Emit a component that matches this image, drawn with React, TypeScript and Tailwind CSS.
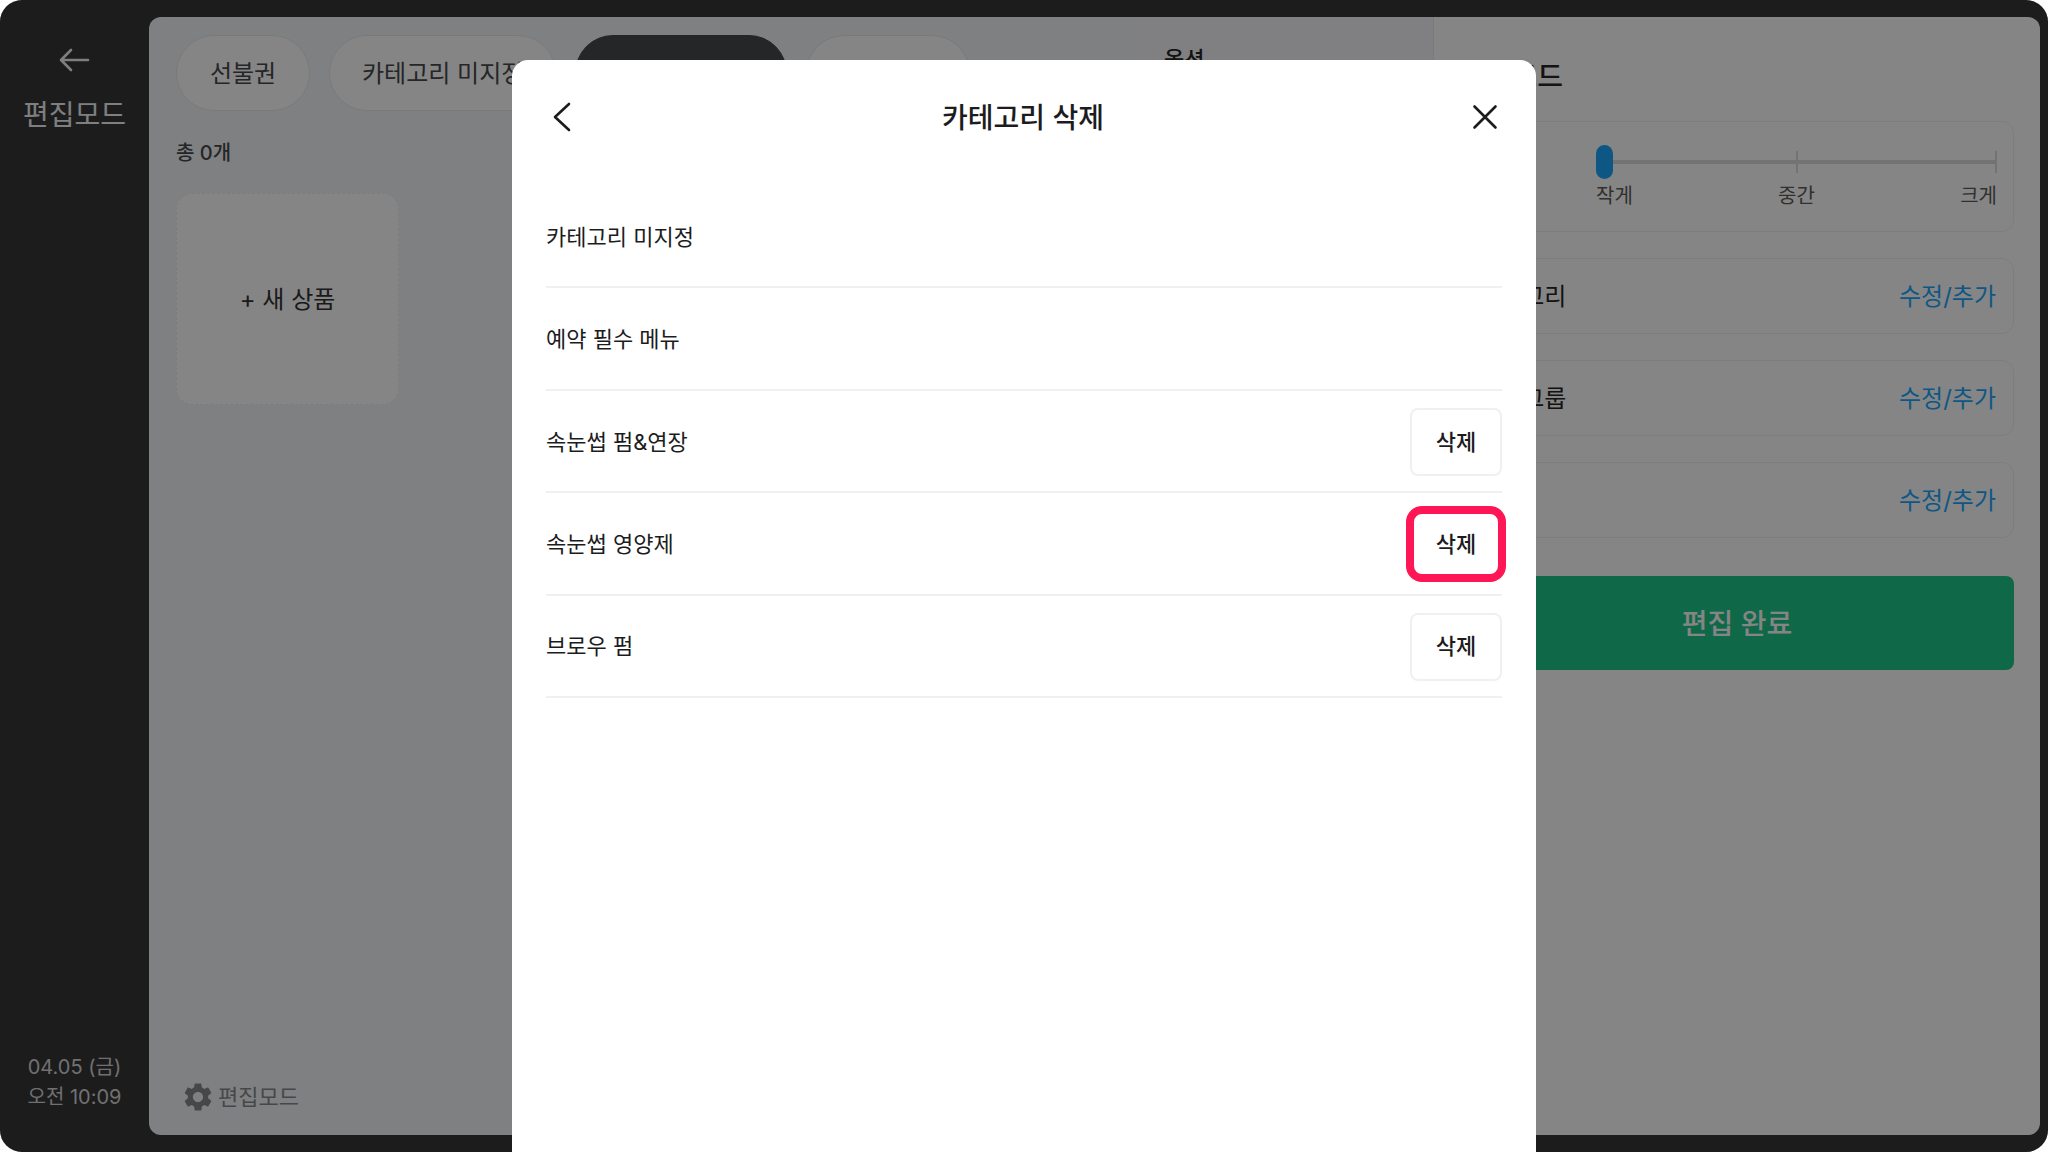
import React, { useState } from 'react';
import { MdSettings } from 'react-icons/md';

interface Category {
  id: number;
  name: string;
  removable: boolean;
}

const categories: Category[] = [
  { id: 1, name: '카테고리 미지정', removable: false },
  { id: 2, name: '예약 필수 메뉴', removable: false },
  { id: 3, name: '속눈썹 펌&연장', removable: true },
  { id: 4, name: '속눈썹 영양제', removable: true },
  { id: 5, name: '브로우 펌', removable: true },
];

const tabs = ['선불권', '카테고리 미지정', '예약 필수 메뉴', '이벤트 10'];
const settings = ['카테고리', '옵션그룹', '할인'];

const Sidebar: React.FC = () => (
  <aside className="w-[149px] shrink-0 flex flex-col items-center justify-between pt-[42px] pb-[40px]">
    <div className="flex flex-col items-center gap-[17px]">
      <button aria-label="뒤로" className="h-9">
        <svg width="32" height="24" viewBox="0 0 32 24" fill="none" stroke="#f4f4f4" strokeWidth="2.6" strokeLinecap="round" strokeLinejoin="round">
          <path d="M13 2L3 12l10 10M3 12h27" />
        </svg>
      </button>
      <h1 className="text-[28px] leading-10 text-[#f4f4f4]">편집모드</h1>
    </div>
    <p className="text-xl leading-[30px] text-[#d6d6da] text-center">
      04.05 (금)
      <br />
      오전 10:09
    </p>
  </aside>
);

const ProductArea: React.FC = () => (
  <section className="flex-1 min-w-0 flex flex-col justify-between pt-[18px] pl-[27px] pb-4 bg-[#f2f6f8]">
    <div>
      <nav className="flex gap-[19px]">
        {tabs.map((tab, i) => (
          <button
            key={tab}
            className={`h-[76px] min-w-[134px] px-8 pt-[2px] rounded-full border text-2xl whitespace-nowrap ${
              i === 2 ? 'bg-[#48494c] border-[#48494c] text-white' : 'bg-white border-[#e6e8ea] text-[#48494c]'
            }`}
          >
            {tab}
          </button>
        ))}
      </nav>
      <p className="mt-6 text-xl leading-9 font-medium text-[#48494c]">총 0개</p>
      <button className="mt-[22px] w-[223px] h-[212px] pt-[2px] rounded-2xl bg-white border border-dashed border-[#eceef0] text-2xl text-[#333]">
        + 새 상품
      </button>
    </div>
    <button className="ml-[5px] self-start flex items-center gap-[3px] h-11 text-[22px] text-[#88898c]">
      <MdSettings size={34} />
      편집모드
    </button>
  </section>
);

const OptionArea: React.FC = () => (
  <section className="w-[294px] shrink-0 bg-[#f6f6f9] border-r border-[#ececee] pt-6 pl-6">
    <h2 className="text-[22px] leading-9 font-medium text-[#262626]">옵션</h2>
  </section>
);

const EditPanel: React.FC = () => {
  const [size, setSize] = useState(0);

  return (
    <section className="w-[606px] shrink-0 bg-white px-[26px] pt-[39px]">
      <h2 className="text-[28px] leading-[42px] font-medium text-[#262626]">편집모드</h2>
      <div className="mt-[23px] flex flex-col gap-[26px]">
        <div className="h-[111px] rounded-xl border border-[#f0f0f0] pl-[18px] pr-4 pt-[23px] flex justify-between">
          <label htmlFor="size" className="text-2xl leading-9 text-[#262626]">크기</label>
          <div className="w-[401px] relative">
            {/* track with ticks under the range input */}
            <svg className="absolute left-0 top-0" width="401" height="34" fill="#dcdcdc">
              <path d="M8 15h393v4H8zM200 6h2v22h-2zM399 6h2v22h-2z" />
            </svg>
            <input
              id="size"
              type="range"
              min={0}
              max={2}
              value={size}
              onChange={(e) => setSize(Number(e.target.value))}
              className="relative block w-full h-[34px] appearance-none bg-transparent [&::-webkit-slider-thumb]:appearance-none [&::-webkit-slider-thumb]:w-[17px] [&::-webkit-slider-thumb]:h-[34px] [&::-webkit-slider-thumb]:rounded-full [&::-webkit-slider-thumb]:bg-[#1ba8ff]"
            />
            <div className="flex justify-between text-xl leading-[34px] text-[#5c5c5c]">
              <span>작게</span>
              <span>중간</span>
              <span>크게</span>
            </div>
          </div>
        </div>
        {settings.map(name => (
          <div key={name} className="h-[76px] rounded-xl border border-[#f0f0f0] px-[17px] pt-[2px] flex items-center justify-between text-2xl">
            <span className="text-[#262626]">{name}</span>
            <button className="text-[#1ba8ff]">수정/추가</button>
          </div>
        ))}
      </div>
      <button className="mt-[38px] w-full h-[94px] pt-[2px] rounded-lg bg-[#1dc88a] text-[28px] font-medium text-white">편집 완료</button>
    </section>
  );
};

const DeleteCategoryModal: React.FC = () => (
  <div className="absolute inset-0 bg-black/48 pt-[60px] flex justify-center">
    <div role="dialog" aria-label="카테고리 삭제" className="w-1/2 bg-white rounded-t-2xl px-[34px] text-[#1c1c1e]">
      <header className="h-[126px] pb-3 flex items-center justify-between">
        <button aria-label="이전" className="w-8 flex justify-center">
          <svg width="24" height="32" viewBox="0 0 24 32" fill="none" stroke="currentColor" strokeWidth="2.6" strokeLinecap="round" strokeLinejoin="round">
            <path d="M19 3L5 16l14 13" />
          </svg>
        </button>
        <h2 className="pt-[2px] text-[28px] font-medium">카테고리 삭제</h2>
        <button aria-label="닫기" className="w-[34px] flex justify-center">
          <svg width="28" height="28" viewBox="0 0 28 28" fill="none" stroke="currentColor" strokeWidth="2.6" strokeLinecap="round">
            <path d="M3.500 3.500l21 21M24.500 3.500l-21 21" />
          </svg>
        </button>
      </header>
      <ul className="h-[512px] flex flex-col">
        {categories.map(category => (
          <li key={category.id} className="flex-1 flex items-center justify-between pt-[2px] border-b-2 border-[#f0f0f0] text-[22px]">
            <span>{category.name}</span>
            {category.removable && (
              <div className="relative">
                <button className="block w-[92px] h-[68px] rounded-lg border-2 border-[#f0f0f0] font-medium">삭제</button>
                {category.id === 4 && (
                  <div className="absolute -inset-1 rounded-2xl border-8 border-[#ff1654] pointer-events-none" />
                )}
              </div>
            )}
          </li>
        ))}
      </ul>
    </div>
  </div>
);

const App: React.FC = () => (
  <div className="bg-white font-['Inter','Noto_Sans_CJK_KR',sans-serif]">
    <div className="relative min-h-screen flex rounded-[22px] overflow-hidden bg-[#363638]">
      <Sidebar />
      <main className="flex-1 min-w-0 flex my-[17px] mr-2 rounded-xl overflow-hidden">
        <ProductArea />
        <OptionArea />
        <EditPanel />
      </main>
      <DeleteCategoryModal />
    </div>
  </div>
);

export default App;
